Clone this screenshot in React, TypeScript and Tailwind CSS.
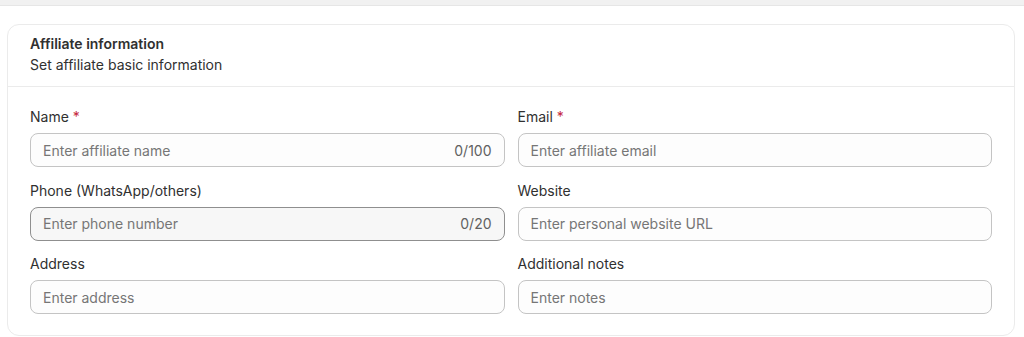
import React from "react";

interface FieldProps {
  label: string;
  placeholder: string;
  required?: boolean;
  counter?: string;
  hovered?: boolean;
}

function Field({ label, placeholder, required, counter, hovered }: FieldProps) {
  return (
    <div className="flex flex-col gap-[6px]">
      <label className="text-[14px] leading-5 text-[#303030]">
        {label}
        {required && <span className="text-[#c5283d] ml-1">*</span>}
      </label>
      <div
        className={`h-[34px] rounded-lg border flex items-center px-3 text-[14px] ${
          hovered ? "bg-[#f7f7f7] border-[#8f8f8f]" : "bg-[#fdfdfd] border-[#c4c4c4]"
        }`}
      >
        <input
          placeholder={placeholder}
          className="flex-1 min-w-0 bg-transparent outline-none text-[#303030] placeholder:text-[#767676]"
        />
        {counter && <span className="text-[#616161] ml-2">{counter}</span>}
      </div>
    </div>
  );
}

export default function App() {
  return (
    <div
      className="w-[1024px] h-[337px] bg-white overflow-hidden"
      style={{ fontFamily: "Inter, 'Noto Sans', sans-serif" }}
    >
      <div className="h-[6px] bg-[#f1f1f1] border-b border-[#e6e6e6]" />
      <div className="ml-[7px] mt-[18px] w-[1008px] rounded-xl border border-[#ebebeb] bg-white">
        {/* Header */}
        <div className="px-[22px] pt-[9px] pb-[11px] border-b border-[#ebebeb]">
          <h2 className="text-[14px] leading-5 font-semibold text-[#303030]">
            Affiliate information
          </h2>
          <p className="text-[14px] leading-5 text-[#303030] mt-[1px]">
            Set affiliate basic information
          </p>
        </div>

        {/* Form */}
        <div className="px-[22px] pt-[20px] pb-[21px] grid grid-cols-2 gap-x-[13px] gap-y-[13.5px]">
          <Field label="Name" placeholder="Enter affiliate name" required counter="0/100" />
          <Field label="Email" placeholder="Enter affiliate email" required />
          <Field label="Phone (WhatsApp/others)" placeholder="Enter phone number" counter="0/20" hovered />
          <Field label="Website" placeholder="Enter personal website URL" />
          <Field label="Address" placeholder="Enter address" />
          <Field label="Additional notes" placeholder="Enter notes" />
        </div>
      </div>
    </div>
  );
}
